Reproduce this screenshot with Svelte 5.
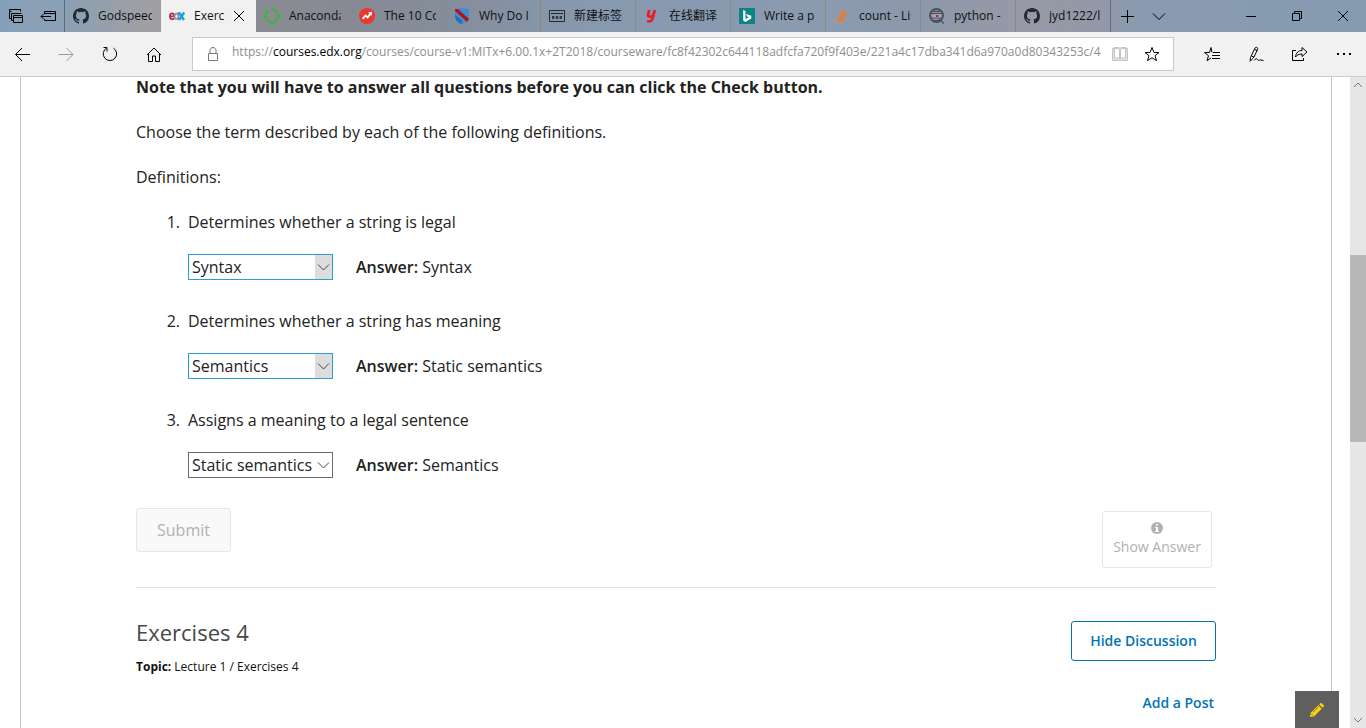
<script>
  const tabs = [
    { icon: 'github', title: 'Godspeed' },
    { icon: 'edx', title: 'Exerc', active: true },
    { icon: 'anaconda', title: 'Anaconda' },
    { icon: 'trend', title: 'The 10 Commands' },
    { icon: 'shield', title: 'Why Do I' },
    { icon: 'newtab', title: '新建标签' },
    { icon: 'youdao', title: '在线翻译' },
    { icon: 'bing', title: 'Write a p' },
    { icon: 'stack', title: 'count - List' },
    { icon: 'quora', title: 'python - ' },
    { icon: 'github', title: 'jyd1222/library' }
  ];

  const choices = ['Syntax', 'Semantics', 'Static semantics'];

  let questions = $state([
    { text: 'Determines whether a string is legal', chosen: 'Syntax', answer: 'Syntax', lit: true },
    { text: 'Determines whether a string has meaning', chosen: 'Semantics', answer: 'Static semantics', lit: true },
    { text: 'Assigns a meaning to a legal sentence', chosen: 'Static semantics', answer: 'Semantics', lit: false }
  ]);
</script>

{#snippet favicon(name)}
  <svg class="ico" viewBox="0 0 16 16" aria-hidden="true">
    {#if name === 'github'}
      <path fill="#24292e" d="M8 0C3.58 0 0 3.58 0 8c0 3.54 2.29 6.53 5.47 7.59.4.07.55-.17.55-.38 0-.19-.01-.82-.01-1.49-2.01.37-2.53-.49-2.69-.94-.09-.23-.48-.94-.82-1.13-.28-.15-.68-.52-.01-.53.63-.01 1.08.58 1.23.82.72 1.21 1.87.87 2.33.66.07-.52.28-.87.51-1.07-1.78-.2-3.64-.89-3.64-3.95 0-.87.31-1.59.82-2.15-.08-.2-.36-1.02.08-2.12 0 0 .67-.21 2.2.82a7.6 7.6 0 0 1 4 0c1.53-1.04 2.2-.82 2.2-.82.44 1.1.16 1.92.08 2.12.51.56.82 1.27.82 2.15 0 3.07-1.87 3.75-3.65 3.95.29.25.54.73.54 1.48 0 1.07-.01 1.93-.01 2.2 0 .21.15.46.55.38A8 8 0 0 0 16 8c0-4.42-3.58-8-8-8z" />
    {:else if name === 'edx'}
      <g fill="none">
        <path stroke="#b52a67" stroke-width="1.800" d="M.9 8.300h4.200C5.100 4.300.9 4.300.9 8.300c0 3.400 3 3.400 4.200 2" />
        <path stroke="#8d8f92" stroke-width="1.600" d="M9.400 4v8M9.400 8.300c0-3.600-3.800-3.600-3.800 0s3.800 3.600 3.800 0" />
        <path stroke="#1c9fe0" stroke-width="2.400" d="M10 4.500l5 7.500M15.200 4.500L10 12" />
      </g>
    {:else if name === 'anaconda'}
      <circle cx="8" cy="8" r="6.500" fill="none" stroke="#43b049" stroke-width="2.600" stroke-dasharray="37 4" transform="rotate(-95 8 8)" />
      <path d="M2 5l2 1M2 11l2-1M5 14l1-2" stroke="#6ca574" stroke-width=".7" />
    {:else if name === 'trend'}
      <circle cx="8" cy="8" r="8" fill="#e8392c" />
      <path d="M3.500 10.800l3-3.300 2.200 1.800 3-3.800" fill="none" stroke="#fff" stroke-width="1.900" />
      <path d="M9 4.500l4-.700-.200 4z" fill="#fff" />
    {:else if name === 'shield'}
      <path fill="#3c8fd6" d="M1 1l7-1 7 1v7c0 4-3 7-7 8-4-1-7-4-7-8z" />
      <path fill="#2a70b0" d="M1 7l7 5v4c-4-1-7-4-7-8z" />
      <path fill="#b80f1b" d="M1 1h3l11 10-2 3L1 3z" />
    {:else if name === 'newtab'}
      <path fill="none" stroke="#25292f" d="M.5 2.500h15v11H.500zM2 5.500h12M3.500 8.500h1.500v2H3.500zM7.300 8.500h1.500v2H7.300zM11 8.500h1.500v2H11z" />
    {:else if name === 'youdao'}
      <path fill="none" stroke="#e5202e" stroke-width="2.800" d="M5.200 2L4 7.200c-.3 2 4.600 2 5.200 0L11 2M10.500 3L8.400 11c-.6 2.500-2.700 2.700-5.400 2" />
    {:else if name === 'bing'}
      <path fill="#0c8484" d="M0 0h16v16H0z" />
      <path fill="#fff" d="M4.200 2l2.300.9v8.200l3.300-1.900-1.700-.8-1-2.500 5.200 1.900v2.700l-5.800 3.400-2.300-1.300z" />
    {:else if name === 'stack'}
      <path fill="none" stroke="#a79a94" d="M1.500 11v4h10v-4" />
      <path fill="none" stroke="#ef7a26" stroke-width="1.300" d="M3 13h7M3.200 10.500l6.800.8M3.800 7.700l6.500 2M5.200 5l5.600 3.500M7.500 2.700l4 5M10.500 1l1.500 6" />
    {:else if name === 'quora'}
      <circle cx="7.500" cy="7.500" r="6.500" fill="none" stroke="#46505c" stroke-width="1.800" />
      <path d="M1.500 5.500h12M1.500 10h12M4 3.500h7M4 12.500h6M10 11l5 4.500" stroke="#46505c" stroke-width="1.200" />
      <path d="M4.500 6h7v3.500h-7z" fill="#a3a9b5" /><path d="M7 7h2.500v2H7z" fill="#d61d3b" />
    {/if}
  </svg>
{/snippet}

<div class="window">
  <header>
    <div class="tabstrip">
      <div class="tools">
        <button aria-label="Tabs you've set aside">
          <svg class="ico" viewBox="0 0 16 16"><path d="M3.500 10.500h-2V1.500h11v2M1.500 3.500h2M5.500 12.500h-2v-7h10M5.500 7.500h9v7h-9zM5.500 9.500h9" /></svg>
        </button>
        <button aria-label="Set these tabs aside">
          <svg class="ico" viewBox="0 0 16 16"><path d="M4.500 6V3.500h11v9h-11V11M4.500 5.500h11M11 8.500H1M3.500 6L1 8.500 3.500 11" /></svg>
        </button>
      </div>
      <nav aria-label="Tabs">
        {#each tabs as tab}
          <div class="tab" class:active={tab.active}>
            {@render favicon(tab.icon)}
            <span class="title">{tab.title}</span>
            {#if tab.active}
              <button class="close" aria-label="Close tab">
                <svg viewBox="0 0 10 10"><path d="M0 0l10 10M10 0L0 10" /></svg>
              </button>
            {/if}
          </div>
        {/each}
      </nav>
      <div class="tools">
        <button aria-label="New tab"><svg class="ico" viewBox="0 0 16 16"><path d="M2 8.500h13M8.500 2v13" /></svg></button>
        <button aria-label="Tab previews"><svg class="ico" viewBox="0 0 16 16"><path d="M2 5.500l6 6 6-6" /></svg></button>
      </div>
      <div class="controls">
        <button aria-label="Minimize"><svg class="ico" viewBox="0 0 16 16"><path d="M3 8.500h10" /></svg></button>
        <button aria-label="Restore"><svg class="ico" viewBox="0 0 16 16"><path d="M3.500 5.500h7v7h-7zM5.500 5.500v-2h7v7h-2" /></svg></button>
        <button aria-label="Close"><svg class="ico" viewBox="0 0 16 16"><path d="M3 3l10 10M13 3L3 13" /></svg></button>
      </div>
    </div>

    <div class="toolbar">
      <div class="history">
        <button aria-label="Back"><svg class="ico" viewBox="0 0 16 16"><path d="M16 8.500H1.500M8 2L1.500 8.500 8 15" /></svg></button>
        <button aria-label="Forward" disabled><svg class="ico" viewBox="0 0 16 16"><path d="M.5 8.500H15M8.500 2L15 8.500 8.500 15" /></svg></button>
        <button aria-label="Refresh"><svg class="ico" viewBox="0 0 16 16"><path d="M11.500 2.200A6.700 6.700 0 1 1 4.700 2M1.500 1.500H5v4" /></svg></button>
        <button aria-label="Home"><svg class="ico" viewBox="0 0 16 16"><path d="M1 9l7-7 7 7M2.500 8v7.500h4V10h3v5.500h4V8" /></svg></button>
      </div>
      <div class="address">
        <svg class="ico lock" viewBox="0 0 16 16" aria-hidden="true"><path d="M3.500 7.500h9v7h-9zM5 7.500V4.500c0-4 6-4 6 0v3" /></svg>
        <span class="url">https://<b>courses.edx.org</b>/courses/course-v1:MITx+6.00.1x+2T2018/courseware/fc8f42302c644118adfcfa720f9f403e/221a4c17dba341d6a970a0d80343253c/4</span>
        <button class="reading" aria-label="Reading view" disabled><svg class="ico" viewBox="0 0 16 16"><path fill="#e3e3e3" d="M.5 2.500H2v-1h5l1 1 1-1h5v1h1.500v12H.500z" /><path fill="#fff" d="M2.500 2.500H6l1.500 1v9l-1.500-.500H2.500zM13.500 2.500H10l-1.500 1v9l1.500-.500h3.500z" /></svg></button>
        <button aria-label="Add to favorites"><svg class="ico" viewBox="0 0 16 16"><path d="M8 1.500l2 5h5l-4 3.200 1.500 5L8 11.700l-4.500 3 1.500-5-4-3.200h5z" /></svg></button>
      </div>
      <div class="actions">
        <button aria-label="Favorites hub"><svg class="ico" viewBox="0 0 16 16"><path d="M8 6.500L7 1.500 5.500 6.500H.5l4 3.200-1.500 5L7 12M9 6.500h7M8 9.500h8M8 12.500h8" /></svg></button>
        <button aria-label="Add notes"><svg class="ico" viewBox="0 0 16 16"><path d="M2 15.500l.5-4L7 2c1-1.500 3.500-.500 2.500 1.500L6 11l-3.500 4M3.500 10l2.500 1M6.500 3.500l3 1M6 14.500c3.500-4 3.500 0 4.500 0s1.500-1 2.500-.500l2.500.500" /></svg></button>
        <button aria-label="Share"><svg class="ico" viewBox="0 0 16 16"><path d="M4 4.500H.500v10h11V12M10 1.500L15 6l-5 4.500V8C7 8 5 9 3.500 11 4 7 6 4.500 10 4.500z" /></svg></button>
        <button aria-label="More"><svg class="ico" viewBox="0 0 16 16"><path d="M1 8h2M7 8h2M13 8h2" stroke-width="2" /></svg></button>
      </div>
    </div>
  </header>

  <div class="view">
    <main>
      <p><strong>Note that you will have to answer all questions before you can click the Check button.</strong></p>
      <p>Choose the term described by each of the following definitions.</p>
      <p>Definitions:</p>
      <ol>
        {#each questions as q, i}
          <li>
            <span class="number">{i + 1}.</span>
            <label for="q{i}">{q.text}</label>
            <div class="response">
              <div class="picker" class:lit={q.lit}>
                <select id="q{i}" bind:value={q.chosen}>
                  {#each choices as c}<option>{c}</option>{/each}
                </select>
                <svg viewBox="0 0 17 24" aria-hidden="true"><path d="M3 9.500l5.500 5.500L14 9.500" /></svg>
              </div>
              <span><b>Answer:</b> {q.answer}</span>
            </div>
          </li>
        {/each}
      </ol>

      <div class="problem-actions">
        <button class="submit" disabled>Submit</button>
        <button class="show" disabled>
          <svg viewBox="0 0 12 12" aria-hidden="true"><circle cx="6" cy="6" r="6" /><path d="M5 2h2v1.500H5zM4 5h3v4h1v1H4V9h1V6H4z" fill="#fff" /></svg>
          Show Answer
        </button>
      </div>

      <section>
        <div>
          <h3>Exercises 4</h3>
          <p class="topic"><b>Topic:</b> Lecture 1 / Exercises 4</p>
        </div>
        <div class="discussion">
          <button class="hide">Hide Discussion</button>
          <button class="post">Add a Post</button>
        </div>
      </section>
    </main>
    <button class="notes" aria-label="Show notes">
      <svg viewBox="0 0 14 14" aria-hidden="true"><path fill="#fcd20b" d="M0 14l.8-4.200L8.300 2.300l3.400 3.400-7.500 7.500zM9.200 1.400L10.300.3c.4-.4 1-.4 1.400 0l2 2c.4.4.4 1 0 1.400l-1.100 1.100z" /><path d="M3 9.200l5.200-5.200M1.500 11l1.500 1.500" stroke="#5f5f5f" stroke-width=".8" /></svg>
    </button>
    <div class="scrollbar" aria-hidden="true">
      <svg viewBox="0 0 16 16"><path d="M4 10l4-4 4 4" /></svg>
      <div class="track"><div class="thumb"></div></div>
      <svg viewBox="0 0 16 16"><path d="M4 6l4 4 4-4" /></svg>
    </div>
  </div>
</div>

<style>
  :global(body) { margin: 0; background: #fff; }
  .window { height: 100vh; display: flex; flex-direction: column; overflow: hidden; font-family: "Open Sans", "Noto Sans CJK SC", sans-serif; color: #222; }
  button { font: inherit; color: inherit; background: none; border: 0; padding: 0; margin: 0; display: grid; place-items: center; }
  svg { display: block; fill: none; stroke: none; }
  .ico { width: 16px; height: 16px; flex: none; }
  button > .ico, .close svg { stroke: #000; }

  .tabstrip { display: flex; height: 32px; background: linear-gradient(90deg, #869fb9 0, #8ba0b4 5%, #a09fa1 11%, #8b8c93 19%, #868a94 26%, #858f9f 35%, #8799af 43%, #8a9bb0 60%, #8d98aa 67%, #9799a6 75%, #9398a8 80%, #889bb0 84%, #879bb0 100%); font-size: 12px; color: #111; }
  .tools { display: flex; }
  .tools button { width: 32px; }
  nav { display: flex; border: solid #626a76; border-width: 0 1px; }
  .tab { box-sizing: border-box; width: 95px; padding: 0 9px 0 8px; display: flex; align-items: center; gap: 9px; border-right: 1px solid #8b8986; }
  .tab:first-child { width: 96px; border: 0; }
  .tab:last-child { width: 94px; border: 0; }
  .tab.active { background: #f1f1f1; padding-right: 12px; border: 0; }
  .title { flex: 1; overflow: hidden; white-space: nowrap; line-height: 20px; }
  .close { width: 10px; height: 32px; }
  .close svg { width: 10px; height: 10px; overflow: visible; }
  .controls { display: flex; margin-left: auto; }
  .controls button { width: 46px; }

  .toolbar { height: 44px; display: flex; align-items: center; background: #f1f1f1; border-bottom: 1px solid #ccc; }
  .history { display: flex; width: 192px; }
  .history button, .actions button { width: 44px; height: 44px; }
  .history button:disabled { opacity: .35; }
  .address { flex: 1; min-width: 0; box-sizing: border-box; height: 34px; display: flex; align-items: center; background: #fff; border: 1px solid #c8c8c8; padding: 0 13px 0 12px; }
  .lock { stroke: #777; margin-right: 11px; }
  .url { flex: 1; overflow: hidden; white-space: nowrap; font-size: 12px; line-height: 20px; padding-bottom: 4px; color: #8e8e8e; }
  .url b { font-weight: 400; color: #000; }
  .address button { margin-left: 16px; }
  .address .reading { margin-left: 10px; }
  .reading .ico { stroke: #c4c4c4; }
  .actions { display: flex; width: 176px; padding-left: 16px; }

  .view { flex: 1; min-height: 0; display: flex; position: relative; padding-left: 20px; }
  main { flex: 1; min-width: 0; border: solid #c8c8c8; border-width: 0 1px; padding: 0 115px; margin-right: 18px; font-size: 16px; line-height: 20px; overflow: hidden; }
  p { margin: 0 0 25px; }
  ol { margin: 0 0 30px; padding: 0; list-style: none; display: grid; gap: 31px; }
  li { display: grid; grid-template-columns: 44px 1fr; gap: 22px 8px; }
  .number { text-align: right; }
  .response { grid-column: 2; display: flex; align-items: center; gap: 23px; height: 26px; }
  b { font-weight: 600; }
  .picker { position: relative; box-sizing: border-box; width: 145px; height: 26px; border: 1px solid #6b6b6b; display: flex; }
  .picker select { appearance: none; flex: 1; border: 0; margin: 0; padding: 0 0 0 3px; background: none; font: inherit; color: inherit; border-radius: 0; }
  .picker svg { position: absolute; right: 0; top: 0; width: 17px; height: 24px; stroke: #444; pointer-events: none; }
  .lit { border-color: #2ba0d8; }
  .lit svg { background: #ddd; }

  .problem-actions { display: flex; justify-content: space-between; align-items: flex-start; padding-bottom: 19px; border-bottom: 1px solid #ddd; }
  .submit { width: 95px; height: 44px; border: 1px solid #e6e6e6; border-radius: 3px; background: #f9f9f9; color: #b1b1b1; }
  .show { width: 110px; height: 57px; margin: 3px 4px 0 0; border: 1px solid #e6e6e6; border-radius: 3px; color: #b1b1b1; font-size: 14px; line-height: 20px; align-content: center; gap: 3px; }
  .show svg { width: 12px; height: 12px; fill: #b1b1b1; }
  section { display: flex; justify-content: space-between; padding-top: 33px; }
  h3 { margin: 0 0 14px; font-size: 22px; line-height: 22px; font-weight: 400; color: #474747; }
  .topic { font-size: 12px; line-height: 20px; margin: 0; color: #111; }
  .topic b { font-weight: 700; }
  .discussion { color: #0075b4; font-size: 14px; font-weight: 600; display: grid; justify-items: end; align-content: start; gap: 32px; }
  .hide { width: 145px; height: 40px; border: 1px solid #0075b4; border-radius: 3px; }
  .post { padding-right: 2px; line-height: 20px; }

  .notes { position: absolute; right: 27px; bottom: 0; width: 44px; height: 37px; background: #5f5f5f; }
  .notes svg { width: 14px; height: 14px; }
  .scrollbar { width: 16px; display: flex; flex-direction: column; background: #e6e6e6; }
  .scrollbar svg { width: 16px; height: 16px; stroke: #777; }
  .track { flex: 1; display: grid; grid-template-rows: 162fr 187fr 270fr; }
  .thumb { grid-row: 2; background: #b8b8b8; }
</style>
